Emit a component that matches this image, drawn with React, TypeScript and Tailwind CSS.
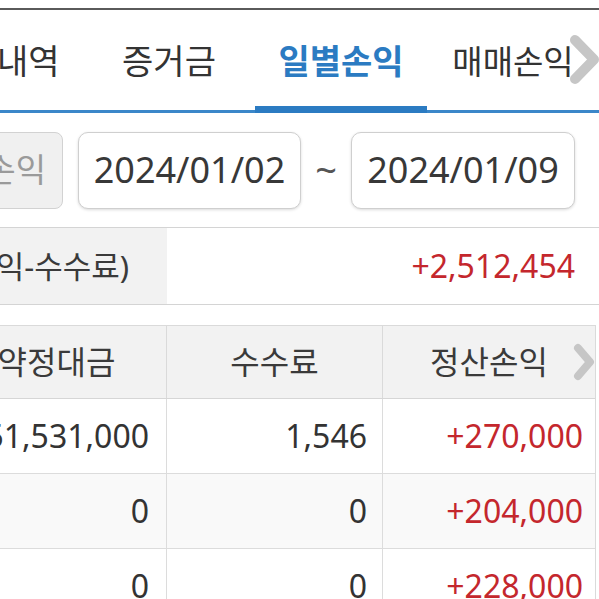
import React from "react";

function Chevron({ w, h, sw }: { w: number; h: number; sw: number }) {
  return (
    <svg width={w} height={h} viewBox={`0 0 ${w} ${h}`}>
      <polyline
        points={`${sw / 2 + 1},${sw / 2 + 1} ${w - sw / 2 - 1},${h / 2} ${sw / 2 + 1},${h - sw / 2 - 1}`}
        fill="none"
        stroke="#c6c6c6"
        strokeWidth={sw}
        strokeLinecap="round"
        strokeLinejoin="round"
      />
    </svg>
  );
}

export default function App() {
  const font = { fontFamily: '"Noto Sans", "Noto Sans CJK KR", sans-serif' };
  const rows = [
    { a: "51,531,000", b: "1,546", c: "+270,000", bg: "bg-white" },
    { a: "0", b: "0", c: "+204,000", bg: "bg-[#f9f9f9]" },
    { a: "0", b: "0", c: "+228,000", bg: "bg-white" },
  ];
  return (
    <div
      className="relative w-[599px] h-[599px] overflow-hidden bg-white text-[#333]"
      style={font}
    >
      <div className="h-[8px] bg-white" />
      <div className="h-[2px] bg-[#5a5a5a]" />
      {/* Tabs */}
      <div className="relative h-[103px] border-b-[3px] border-[#3b87c9]">
        <div className="flex h-full ml-[-89px] pt-[3px]">
          <div className="w-[172px] flex items-center justify-center text-[34px] whitespace-nowrap">
            거래내역
          </div>
          <div className="w-[172px] flex items-center justify-center text-[34px] whitespace-nowrap">
            증거금
          </div>
          <div className="relative w-[172px] flex items-center justify-center text-[34px] font-bold text-[#2b7bc2] whitespace-nowrap">
            일별손익
            <div className="absolute left-0 right-0 bottom-[-3px] h-[7px] bg-[#2b7bc2]" />
          </div>
          <div className="w-[172px] flex items-center justify-center text-[33px] whitespace-nowrap">
            매매손익
          </div>
        </div>
        <div className="absolute left-[569px] top-[24px]">
          <Chevron w={31} h={51} sw={10} />
        </div>
      </div>
      {/* Date row */}
      <div className="flex items-center h-[115px] border-b border-[#d4d4d4]">
        <div className="ml-[-50px] w-[113px] h-[77px] flex items-center justify-end pr-[16px] rounded-[8px] border border-[#d2d2d2] bg-[#f0f0f0] text-[33px] text-[#9a9a9a] whitespace-nowrap">
          손익
        </div>
        <div className="ml-[15px] w-[223px] h-[77px] flex items-center justify-center rounded-[10px] border border-[#cfcfcf] bg-white shadow-[0_1px_3px_rgba(0,0,0,0.15)] text-[36px] text-[#383838]">
          2024/01/02
        </div>
        <div className="w-[50px] flex items-center justify-center text-[38px] text-[#555] pb-[2px]">
          ~
        </div>
        <div className="w-[224px] h-[77px] flex items-center justify-center rounded-[10px] border border-[#cfcfcf] bg-white shadow-[0_1px_3px_rgba(0,0,0,0.15)] text-[36px] text-[#383838]">
          2024/01/09
        </div>
      </div>
      {/* Summary */}
      <div className="flex h-[77px] border-b border-[#d4d4d4]">
        <div className="w-[167px] shrink-0 bg-[#f2f2f2] flex items-center justify-end pr-[38px] text-[31px] text-[#3a3a3a] whitespace-nowrap">
          총손익(매매손익-수수료)
        </div>
        <div className="flex-1 flex items-center justify-end pr-[24px] text-[32px] text-[#c4272d]">
          +2,512,454
        </div>
      </div>
      {/* Table */}
      <div className="mt-[20px] w-[596px] border-t border-r border-[#dadada]">
        <div className="relative flex h-[73px] bg-[#f2f2f2] border-b border-[#d6d6d6] text-[32px] text-[#3a3a3a]">
          <div className="ml-[-53px] w-[220px] flex items-center justify-center border-r border-[#dadada] whitespace-nowrap">
            약정대금
          </div>
          <div className="w-[216px] flex items-center justify-center border-r border-[#dadada]">
            수수료
          </div>
          <div className="flex-1 flex items-center justify-center">
            정산손익
          </div>
          <div className="absolute left-[573px] top-[17px]">
            <Chevron w={22} h={38} sw={8} />
          </div>
        </div>
        {rows.map((r, i) => (
          <div
            key={i}
            className={`flex h-[75px] border-b border-[#dcdcdc] text-[32px] ${r.bg}`}
          >
            <div className="w-[167px] flex items-center justify-end pr-[17px] border-r border-[#dcdcdc] whitespace-nowrap">
              {r.a}
            </div>
            <div className="w-[216px] flex items-center justify-end pr-[15px] border-r border-[#dcdcdc]">
              {r.b}
            </div>
            <div className="flex-1 flex items-center justify-end pr-[12px] text-[#c4272d]">
              {r.c}
            </div>
          </div>
        ))}
      </div>
    </div>
  );
}
